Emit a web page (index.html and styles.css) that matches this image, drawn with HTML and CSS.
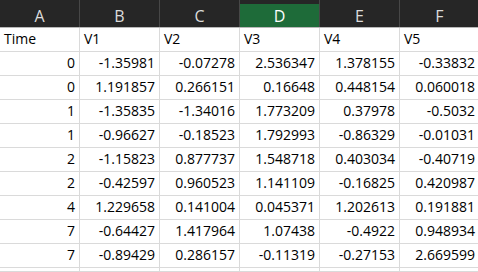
FILE: index.html
```html
<!DOCTYPE html>
<html>
<head>
<meta charset="utf-8">
<link rel="stylesheet" href="styles.css">
</head>
<body>
<div class="sheet">
  <div class="hrow">
    <div class="hcell">A</div>
    <div class="hcell">B</div>
    <div class="hcell">C</div>
    <div class="hcell sel">D</div>
    <div class="hcell">E</div>
    <div class="hcell">F</div>
  </div>
  <div class="row">
    <div class="cell txt">Time</div><div class="cell txt">V1</div><div class="cell txt">V2</div><div class="cell txt">V3</div><div class="cell txt">V4</div><div class="cell txt">V5</div>
  </div>
  <div class="row">
    <div class="cell">0</div><div class="cell">-1.35981</div><div class="cell">-0.07278</div><div class="cell">2.536347</div><div class="cell">1.378155</div><div class="cell">-0.33832</div>
  </div>
  <div class="row">
    <div class="cell">0</div><div class="cell">1.191857</div><div class="cell">0.266151</div><div class="cell">0.16648</div><div class="cell">0.448154</div><div class="cell">0.060018</div>
  </div>
  <div class="row">
    <div class="cell">1</div><div class="cell">-1.35835</div><div class="cell">-1.34016</div><div class="cell">1.773209</div><div class="cell">0.37978</div><div class="cell">-0.5032</div>
  </div>
  <div class="row">
    <div class="cell">1</div><div class="cell">-0.96627</div><div class="cell">-0.18523</div><div class="cell">1.792993</div><div class="cell">-0.86329</div><div class="cell">-0.01031</div>
  </div>
  <div class="row">
    <div class="cell">2</div><div class="cell">-1.15823</div><div class="cell">0.877737</div><div class="cell">1.548718</div><div class="cell">0.403034</div><div class="cell">-0.40719</div>
  </div>
  <div class="row">
    <div class="cell">2</div><div class="cell">-0.42597</div><div class="cell">0.960523</div><div class="cell">1.141109</div><div class="cell">-0.16825</div><div class="cell">0.420987</div>
  </div>
  <div class="row">
    <div class="cell">4</div><div class="cell">1.229658</div><div class="cell">0.141004</div><div class="cell">0.045371</div><div class="cell">1.202613</div><div class="cell">0.191881</div>
  </div>
  <div class="row">
    <div class="cell">7</div><div class="cell">-0.64427</div><div class="cell">1.417964</div><div class="cell">1.07438</div><div class="cell">-0.4922</div><div class="cell">0.948934</div>
  </div>
  <div class="row">
    <div class="cell">7</div><div class="cell">-0.89429</div><div class="cell">0.286157</div><div class="cell">-0.11319</div><div class="cell">-0.27153</div><div class="cell">2.669599</div>
  </div>
  <div class="row last">
    <div class="cell"></div><div class="cell"></div><div class="cell"></div><div class="cell"></div><div class="cell"></div><div class="cell"></div>
  </div>
</div>
</body>
</html>
```

FILE: styles.css
```css
html, body {
  margin: 0;
  padding: 0;
  background: #ffffff;
  overflow: hidden;
}
.sheet {
  width: 478px;
  height: 272px;
  overflow: hidden;
  font-family: "Open Sans", "Liberation Sans", sans-serif;
  font-size: 14px;
  color: #000000;
}
.hrow {
  display: grid;
  grid-template-columns: repeat(6, 80px);
  height: 28px;
  background: #262626;
  border-bottom: 1px solid #b8b8b8;
  box-sizing: border-box;
}
.hcell {
  border-right: 1px solid #474747;
  color: #dcdcdc;
  display: flex;
  align-items: center;
  justify-content: center;
  padding-top: 4px;
  font-size: 16px;
}
.hcell.sel {
  background: #1e6b39;
  box-shadow: inset 0 4px 0 #262626;
  color: #ffffff;
}
.row {
  display: grid;
  grid-template-columns: repeat(6, 80px);
  height: 24px;
}
.row.last {
  height: 4px;
}
.cell {
  border-right: 1px solid #dadada;
  border-bottom: 1px solid #dadada;
  display: flex;
  align-items: flex-end;
  justify-content: flex-end;
  padding: 0 4px 3px 4px;
  white-space: nowrap;
  line-height: 18px;
}
.cell.txt {
  justify-content: flex-start;
}
```
